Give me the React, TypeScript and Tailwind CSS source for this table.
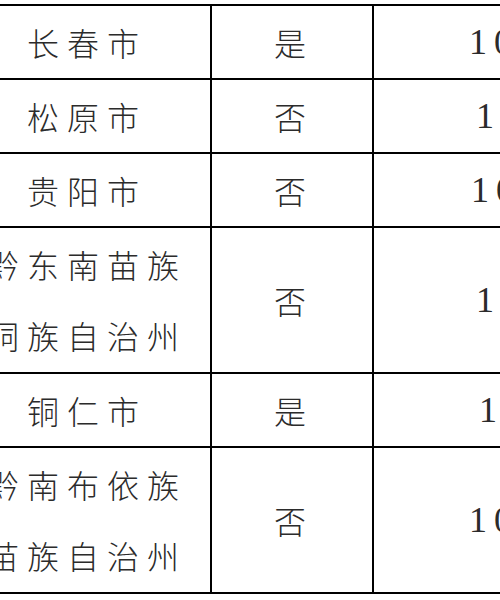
const rows = [
  { lines: ["长春市"], flag: "是", num: "10.9", pad: "pl-[95px]", h: "h-[74px]" },
  { lines: ["松原市"], flag: "否", num: "13.6", pad: "pl-[102px]", h: "h-[74px]" },
  { lines: ["贵阳市"], flag: "否", num: "10.2", pad: "pl-[97px]", h: "h-[74px]" },
  { lines: ["黔东南苗族", "侗族自治州"], flag: "否", num: "12.4", pad: "pl-[102px]", h: "h-[146px]" },
  { lines: ["铜仁市"], flag: "是", num: "11.8", pad: "pl-[105px]", h: "h-[74px]" },
  { lines: ["黔南布依族", "苗族自治州"], flag: "否", num: "10.7", pad: "pl-[95px]", h: "h-[146px]" },
]

export default function App() {
  return (
    <div className="w-[500px] h-[600px] overflow-hidden bg-white text-[#2b2b2b]">
      <div className="ml-[-46px] mt-1 w-[700px] border-t-2 border-black">
        {rows.map((r, i) => (
          <div key={i} className={`flex border-b-2 border-black ${r.h}`}>
            <div className="w-[258px] shrink-0 border-x-2 border-black flex flex-col items-center justify-center pl-2 text-[32px] font-light leading-[71px] tracking-[8px] font-['Noto_Sans_CJK_SC',sans-serif]">
              {r.lines.map((l) => (
                <div key={l}>{l}</div>
              ))}
            </div>
            <div className="w-[162px] shrink-0 border-r-2 border-black flex items-center justify-center pr-1 text-[32px] font-light font-['Noto_Sans_CJK_SC',sans-serif]">
              {r.flag}
            </div>
            <div className={`flex-1 flex items-center whitespace-nowrap text-[36px] tracking-[7px] font-['Liberation_Serif',serif] ${r.pad}`}>
              {r.num}
            </div>
          </div>
        ))}
      </div>
    </div>
  )
}
